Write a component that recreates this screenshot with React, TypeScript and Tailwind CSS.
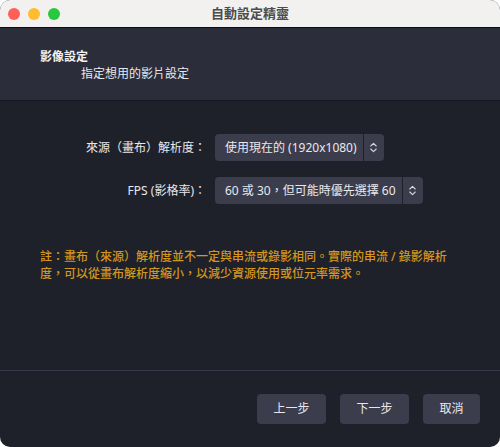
import React from "react";

const font = { fontFamily: '"Noto Sans", "Noto Sans CJK TC", sans-serif' };

function Chevrons() {
  return (
    <svg width="9" height="13" viewBox="0 0 9 13" fill="none" stroke="#d6d7de" strokeWidth="1.1" strokeLinecap="round" strokeLinejoin="round">
      <path d="M1.8 5 L4.5 2.3 L7.2 5" />
      <path d="M1.8 8 L4.5 10.7 L7.2 8" />
    </svg>
  );
}

function Combo({ text }: { text: string }) {
  return (
    <div className="flex h-[27px] items-stretch rounded-[4px] bg-[#3b3d4c] text-[12px] text-[#e8e8ec]">
      <div className="flex items-center pl-[10px] pr-[6px]">{text}</div>
      <div className="w-px bg-[#1f212a]" />
      <div className="flex w-[20px] items-center justify-center">
        <Chevrons />
      </div>
    </div>
  );
}

export default function App() {
  return (
    <div className="h-[447px] w-[500px] bg-white" style={font}>
      <div className="flex h-full w-full flex-col overflow-hidden rounded-[10px] bg-[#1f212a]">
        <div className="relative flex h-[28px] shrink-0 items-center justify-center border-b border-[#0d0d10] bg-[#f2f1f0]">
          <div className="absolute left-[8px] top-[8px] flex gap-[8px]">
            <div className="h-[12px] w-[12px] rounded-full bg-[#fe5f57]" />
            <div className="h-[12px] w-[12px] rounded-full bg-[#febc2e]" />
            <div className="h-[12px] w-[12px] rounded-full bg-[#28c840]" />
          </div>
          <span className="text-[13px] font-semibold text-[#4c4c4c]">自動設定精靈</span>
        </div>
        <div className="flex h-[73px] shrink-0 flex-col border-b border-[#17181f] bg-[#2b2d3a] pl-[40px] pt-[20px]">
          <div className="text-[12px] font-bold leading-[17px] text-[#f2f2f4]">影像設定</div>
          <div className="pl-[41px] text-[12px] leading-[17px] text-[#e8e8ec]">指定想用的影片設定</div>
        </div>
        <div className="flex flex-1 flex-col border-b border-[#373848] pt-[33px]">
          <div className="grid grid-cols-[206px_auto] items-center gap-x-[9px] gap-y-[16px]">
            <div className="text-right text-[12px] text-[#e8e8ec]">來源（畫布）解析度：</div>
            <div className="flex">
              <Combo text="使用現在的 (1920x1080)" />
            </div>
            <div className="text-right text-[12px] text-[#e8e8ec]">FPS (影格率)：</div>
            <div className="flex">
              <Combo text="60 或 30，但可能時優先選擇 60" />
            </div>
          </div>
          <div className="mt-[44px] px-[40px] text-[12px] font-medium leading-[17px] text-[#d4961c]">
            註：畫布（來源）解析度並不一定與串流或錄影相同。實際的串流 / 錄影解析度，可以從畫布解析度縮小，以減少資源使用或位元率需求。
          </div>
        </div>
        <div className="flex h-[76px] shrink-0 items-start justify-end gap-[14px] pr-[20px] pt-[23px]">
          <button className="h-[30px] w-[69px] rounded-[4px] bg-[#3b3d4c] text-[12px] text-[#e8e8ec]">上一步</button>
          <button className="h-[30px] w-[69px] rounded-[4px] bg-[#3b3d4c] text-[12px] text-[#e8e8ec]">下一步</button>
          <button className="h-[30px] w-[57px] rounded-[4px] bg-[#3b3d4c] text-[12px] text-[#e8e8ec]">取消</button>
        </div>
      </div>
    </div>
  );
}
